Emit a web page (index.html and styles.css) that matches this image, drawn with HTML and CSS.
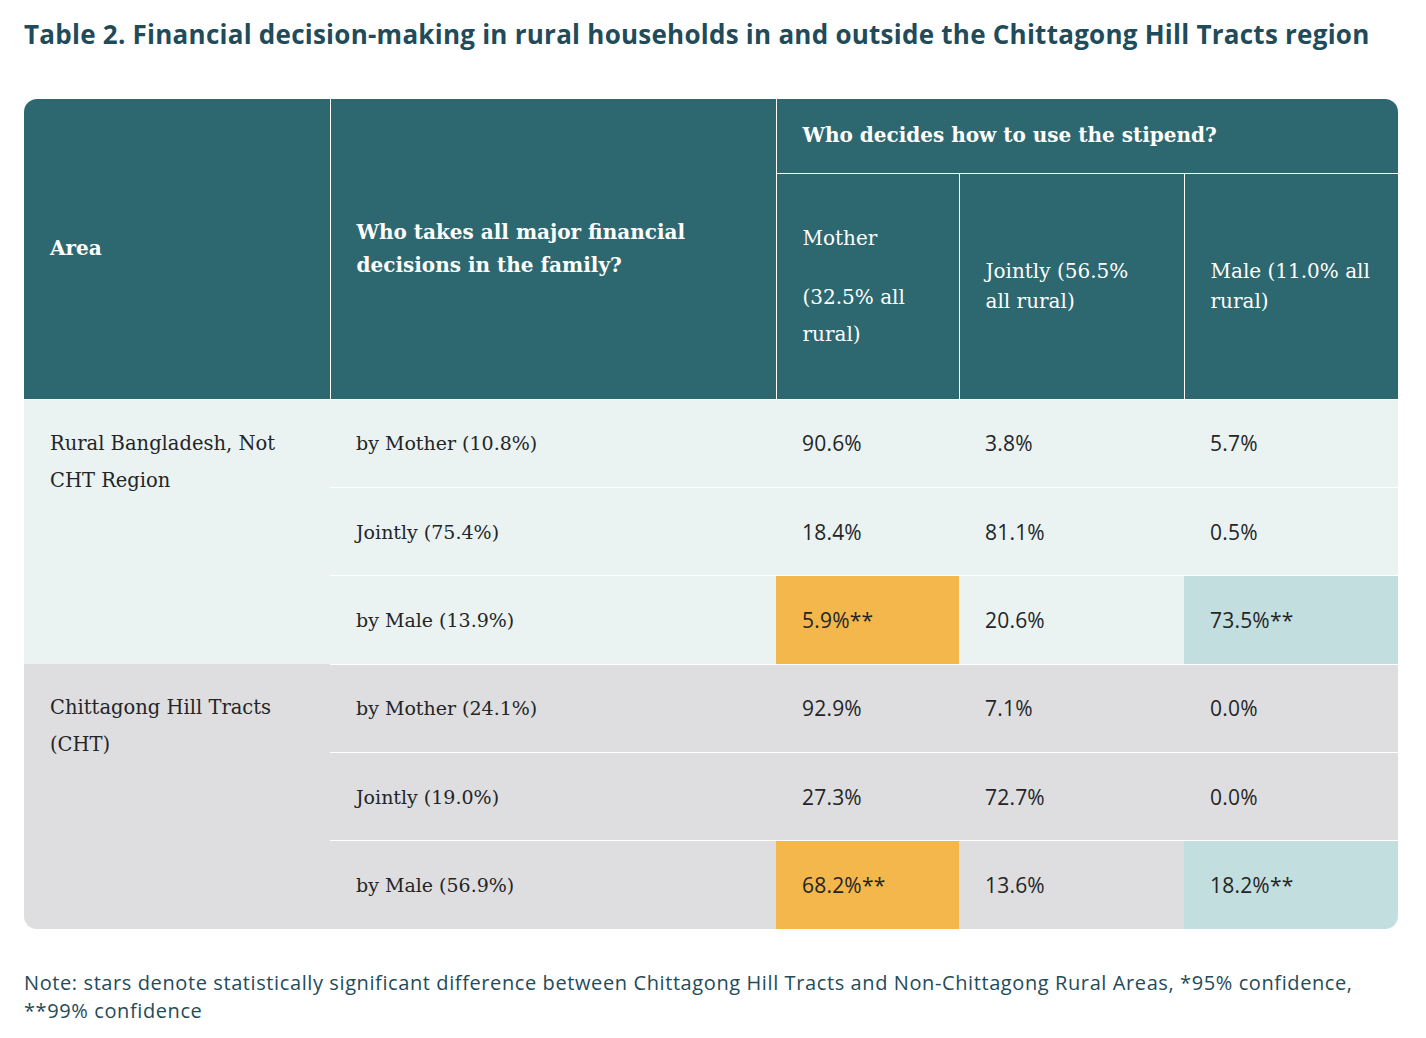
FILE: index.html
```html
<!DOCTYPE html>
<html lang="en">
<head>
<meta charset="utf-8">
<title>Table 2</title>
<link rel="stylesheet" href="styles.css">
</head>
<body>
<main class="page">
  <h1 class="title">Table 2. Financial decision-making in rural households in and outside the Chittagong Hill Tracts region</h1>
  <div class="table-wrap">
    <table class="data">
      <colgroup>
        <col class="c1"><col class="c2"><col class="c3"><col class="c4"><col class="c5">
      </colgroup>
      <thead>
        <tr class="h1">
          <th rowspan="2" class="hb">Area</th>
          <th rowspan="2" class="hb">Who takes all major financial<br>decisions in the family?</th>
          <th colspan="3" class="hb">Who decides how to use the stipend?</th>
        </tr>
        <tr class="h2">
          <th class="hn mother"><p>Mother</p><p class="gap">(32.5% all<br>rural)</p></th>
          <th class="hn">Jointly (56.5%<br>all rural)</th>
          <th class="hn">Male (11.0% all<br>rural)</th>
        </tr>
      </thead>
      <tbody class="sec rural">
        <tr>
          <td rowspan="3" class="area">Rural Bangladesh, Not<br>CHT Region</td>
          <td class="who">by Mother (10.8%)</td>
          <td class="num">90.6%</td><td class="num">3.8%</td><td class="num">5.7%</td>
        </tr>
        <tr>
          <td class="who">Jointly (75.4%)</td>
          <td class="num">18.4%</td><td class="num">81.1%</td><td class="num">0.5%</td>
        </tr>
        <tr>
          <td class="who">by Male (13.9%)</td>
          <td class="num hl-orange">5.9%**</td><td class="num">20.6%</td><td class="num hl-teal">73.5%**</td>
        </tr>
      </tbody>
      <tbody class="sec cht">
        <tr>
          <td rowspan="3" class="area">Chittagong Hill Tracts<br>(CHT)</td>
          <td class="who">by Mother (24.1%)</td>
          <td class="num">92.9%</td><td class="num">7.1%</td><td class="num">0.0%</td>
        </tr>
        <tr>
          <td class="who">Jointly (19.0%)</td>
          <td class="num">27.3%</td><td class="num">72.7%</td><td class="num">0.0%</td>
        </tr>
        <tr>
          <td class="who">by Male (56.9%)</td>
          <td class="num hl-orange">68.2%**</td><td class="num">13.6%</td><td class="num hl-teal">18.2%**</td>
        </tr>
      </tbody>
    </table>
  </div>
  <p class="note">Note: stars denote statistically significant difference between Chittagong Hill Tracts and Non-Chittagong Rural Areas, *95% confidence, **99% confidence</p>
</main>
</body>
</html>
```
FILE: styles.css
```css
* { box-sizing: border-box; }
html, body { margin: 0; padding: 0; background: #ffffff; }
.page { padding: 14px 24px 0 24px; width: 1426px; }
.title {
  margin: 0;
  font-family: "Open Sans", "Lato", sans-serif;
  font-weight: 700;
  font-size: 26px;
  line-height: 40px;
  color: #1f4b5a;
  letter-spacing: 0.25px;
}
.table-wrap {
  margin-top: 45px;
  width: 1374px;
  border-radius: 13px;
  overflow: hidden;
}
.data {
  width: 1374px;
  border-collapse: collapse;
  table-layout: fixed;
}
.c1 { width: 306px; }
.c2 { width: 446px; }
.c3 { width: 183px; }
.c4 { width: 225px; }
.c5 { width: 214px; }
.data th {
  background: #2d6870;
  color: #ffffff;
  text-align: left;
  vertical-align: middle;
  padding: 0 8px 0 26px;
  border: 1px solid #ffffff;
  font-family: "DejaVu Serif", serif;
}
.data thead tr:first-child th { border-top: 0; }
.data th:first-child { border-left: 0; }
.data tr th:last-child { border-right: 0; }
.h1 th { height: 74px; }
.h2 th { height: 226px; }
.hb {
  font-weight: 700;
  font-size: 20px;
  line-height: 33px;
  letter-spacing: 0;
}
.hn {
  font-weight: 400;
  font-size: 20px;
  line-height: 30px;
  letter-spacing: 0;
}
.hn p { margin: 0; }
.hn.mother { padding-top: 3px; }
.hn p.gap { margin-top: 26px; line-height: 37px; }
.data td {
  height: 88.4px;
  padding: 0 8px 0 26px;
  border-top: 1px solid #ffffff;
  color: #232527;
  vertical-align: middle;
}
.sec.rural td { background: #eaf3f2; }
.sec.cht td { background: #dedee0; }
.data td.area {
  vertical-align: top;
  padding-top: 25px;
  font-family: "DejaVu Serif", serif;
  font-size: 19.5px;
  line-height: 37px;
  letter-spacing: 0;
  border-top: 0;
}
.data td.who {
  font-family: "DejaVu Serif", serif;
  font-size: 19px;
  letter-spacing: 0;
}
.data td.num {
  font-family: "Open Sans", "Noto Sans", sans-serif;
  font-size: 21px;
  letter-spacing: 0.2px;
}
.sec.rural td.hl-orange, .sec.cht td.hl-orange { background: #f4b74b; }
.sec.rural td.hl-teal, .sec.cht td.hl-teal { background: #c3dedf; }
.note {
  margin: 40px 0 0 0;
  width: 1374px;
  font-family: "Open Sans", "Lato", sans-serif;
  font-size: 20px;
  line-height: 28px;
  letter-spacing: 0.6px;
  color: #1f4b5a;
}
```
